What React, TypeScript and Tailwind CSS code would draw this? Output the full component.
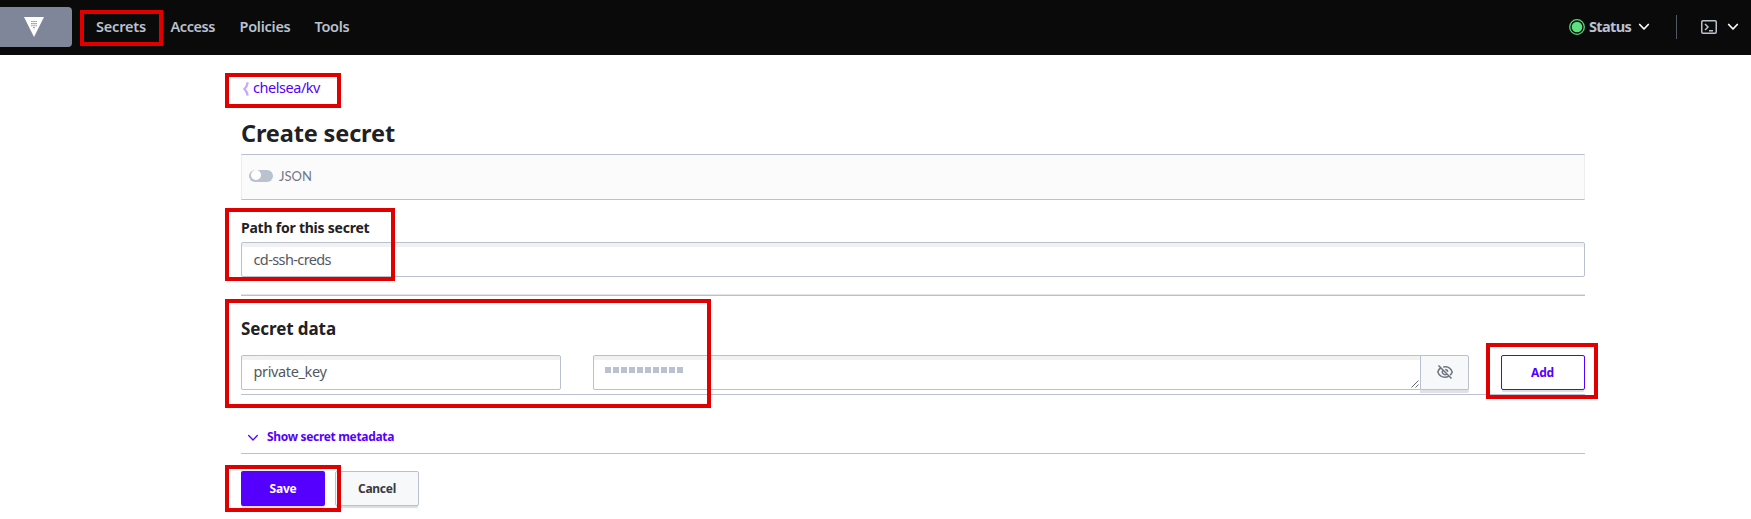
import type { ReactNode } from 'react';

const navItems = [
  { label: 'Access', className: 'w-[45px] tracking-[-0.43px]' },
  { label: 'Policies', className: 'ml-6 w-[51px] tracking-[-0.26px]' },
  { label: 'Tools', className: 'ml-6 tracking-[-0.28px]' },
];

function Highlight({ className }: { className: string }) {
  return <div className={`pointer-events-none absolute border-4 border-[#e00000] ${className}`} />;
}

function Chevron({ className }: { className: string }) {
  return (
    <svg viewBox="0 0 12 8" className={`h-2 w-3 shrink-0 ${className}`} fill="none" stroke="currentColor" strokeLinecap="round" strokeLinejoin="round">
      <path d="M1.7 1.5 6 6l4.3-4.5" />
    </svg>
  );
}

function Field({ children, className }: { children: ReactNode; className: string }) {
  return (
    <div className={`flex h-[35px] items-center rounded-[2px] border border-[#bac0d0] bg-white pl-[11.5px] text-[14.5px] text-[#525761] shadow-[inset_0_4px_0_#f1f1f2] ${className}`}>
      {children}
    </div>
  );
}

function Header() {
  return (
    <header className="flex h-[55px] items-center bg-[#0a0a0a] pb-px text-[14.5px] font-semibold text-[#bac1d0]">
      <div className="flex h-10 w-[72px] items-center rounded-r-[4px] bg-[#7f869a] pl-6">
        <svg viewBox="0 0 20 20" className="size-5">
          <path d="M0 0h20L10 20z" fill="#fff" />
          <path
            d="M7.2 4.5h1.4M9.3 4.5h1.4M11.4 4.5h1.4M7.2 6.6h1.4M9.3 6.6h1.4M11.4 6.6h1.4M7.2 8.7h1.4M9.3 8.7h1.4M11.4 8.7h1.4M9.3 10.6h1.4"
            stroke="#7f869a"
            strokeWidth="1.1"
          />
        </svg>
      </div>
      <span className="ml-6 w-[74.5px] tracking-[-0.18px]">Secrets</span>
      {navItems.map((item) => (
        <span key={item.label} className={item.className}>{item.label}</span>
      ))}
      <div className="ml-auto flex items-center">
        <svg viewBox="0 0 16 16" className="size-4">
          <circle cx="8" cy="8" r="7.3" fill="none" stroke="#53d97a" strokeWidth="1.3" />
          <circle cx="8" cy="8" r="5.3" fill="#5ce080" />
        </svg>
        <span className="ml-1 w-[49px] font-bold tracking-[-0.62px]">Status</span>
        <Chevron className="stroke-[1.7] text-white" />
        <div className="ml-[26px] h-6 w-px bg-[#525761]" />
        <svg viewBox="0 0 16 14" className="ml-6 h-3.5 w-4" fill="none" stroke="currentColor" strokeWidth="1.5">
          <rect x="0.75" y="0.75" width="14.5" height="12.5" rx="1.2" />
          <path d="M4 4l3 3-3 3M8 10.7h4" />
        </svg>
        <Chevron className="mr-3 ml-2.5 stroke-[1.7] text-white" />
      </div>
    </header>
  );
}

export default function App() {
  return (
    <div className="relative h-[519px] w-[1751px] overflow-hidden bg-white font-['Noto_Sans','Open_Sans',sans-serif] whitespace-nowrap text-[#1f2124]">
      <Header />
      <main className="ml-[241px] w-[1344px]">
        <div className="flex h-[65px] items-start pt-[22px] text-[#5500ff]">
          <svg viewBox="0 0 7 14" className="mt-[5px] ml-px h-3.5 w-[7px]" fill="none" stroke="#c7a8fb" strokeWidth="2.3">
            <path d="M5.7.3C5.3 3.1 4.2 5.3 2.4 7c1.8 1.7 2.9 3.9 3.3 6.7" />
          </svg>
          <span className="ml-1 text-[14.5px] leading-5 tracking-[-0.46px]">chelsea/kv</span>
        </div>
        <h1 className="h-[34px] text-[23.5px] leading-[26px] font-bold tracking-[-0.14px]">Create secret</h1>

        <div className="flex h-[46px] items-center border border-x-[#ebedf2] border-y-[#bac0d0] bg-[#fbfbfc] pl-[7px]">
          <div className="mb-0.5 flex h-3 w-6 items-start rounded-full bg-[#bac1cf] pl-0.5">
            <div className="size-2.5 rounded-full bg-white" />
          </div>
          <span className="ml-1.5 font-['Lato','Noto_Sans',sans-serif] text-[13px] text-[#6f7682]">JSON</span>
        </div>

        <div className="h-[42px] pt-[18px] text-[14px] leading-5 font-bold tracking-[-0.23px]">Path for this secret</div>
        <Field className="tracking-[-0.61px]">cd-ssh-creds</Field>
        <div className="mt-[17px] h-0.5 border-t border-b border-t-[#e4e5e8] border-b-[#bac0d0]" />

        <h2 className="h-[59px] pt-[21px] text-[17px] leading-6 font-bold tracking-[-0.09px]">Secret data</h2>
        <div className="flex h-10 items-start border-b border-[#bac0d0]">
          <Field className="w-80 pb-0.5 tracking-[-0.37px]">private_key</Field>
          <Field className="relative ml-8 w-[829px] rounded-r-none">
            <div className="mb-1.5 flex gap-0.5">
              {Array.from({ length: 10 }, (_, i) => (
                <i key={i} className="size-1.5 bg-[#bac1d0]" />
              ))}
            </div>
            <svg viewBox="0 0 8 8" className="absolute right-px bottom-px size-2" stroke="#555" strokeWidth="0.9">
              <path d="M.5 7.5l7-7M4.5 7.5l3-3" />
            </svg>
          </Field>
          <div className="-ml-px flex h-[35px] w-[49px] items-center justify-center rounded-r-[2px] border border-[#bac0d0] bg-[#f7f8fa] shadow-[0_3px_0_#e0e1e4]">
            <svg viewBox="0 0 16 14" className="mb-px h-3.5 w-4" fill="none" stroke="#6f7682" strokeWidth="1.5">
              <path d="M4.2 2.5C2.5 3.5 1.3 5.3.8 7c1.2 3.3 4 5.2 7.2 5.2 1.3 0 2.5-.3 3.5-.9M6.2 1.9C10.6 1 14 3.4 15.2 7c-.4 1.2-1.1 2.3-2 3.1M6 5.2A2.7 2.7 0 0 0 9.8 9M8.2 4.4a2.7 2.7 0 0 1 2.5 2.4M1.5.5l13 13" />
            </svg>
          </div>
          <button className="ml-8 h-[35px] w-[84px] rounded-[2px] border border-[#5500ff] bg-white pr-px text-[12px] font-bold tracking-[-0.16px] text-[#5500ff] shadow-[0_3px_1px_-1px_#dcdde0]">
            Add
          </button>
        </div>

        <div className="flex h-[59px] items-end border-b border-[#bac0d0] pb-2 text-[#5500ff]">
          <Chevron className="mb-[3px] ml-1.5 stroke-[1.3]" />
          <span className="ml-2 text-[12px] leading-4 font-bold tracking-[-0.32px]">Show secret metadata</span>
        </div>

        <div className="mt-[17px] flex gap-2.5 text-[12px] font-bold">
          <button className="h-[35px] w-[84px] rounded-[2px] bg-[#5500ff] tracking-[-0.2px] text-white shadow-[0_3px_1px_-1px_#dcdde0]">
            Save
          </button>
          <button className="h-[35px] w-[84px] rounded-[2px] border border-[#bac0d0] bg-[#f7f8fa] tracking-[-0.27px] text-[#373a42] shadow-[0_3px_1px_-1px_#dcdde0]">
            Cancel
          </button>
        </div>
      </main>

      <Highlight className="top-2.5 left-20 h-9 w-[83px]" />
      <Highlight className="top-[73px] left-[225px] h-[35px] w-[116px]" />
      <Highlight className="top-[208px] left-[225px] h-[73px] w-[170px]" />
      <Highlight className="top-[299px] left-[225px] h-[109px] w-[486px]" />
      <Highlight className="top-[343px] left-[1486px] h-14 w-28" />
      <Highlight className="top-[465px] left-[225px] h-[47px] w-[116px]" />
    </div>
  );
}
